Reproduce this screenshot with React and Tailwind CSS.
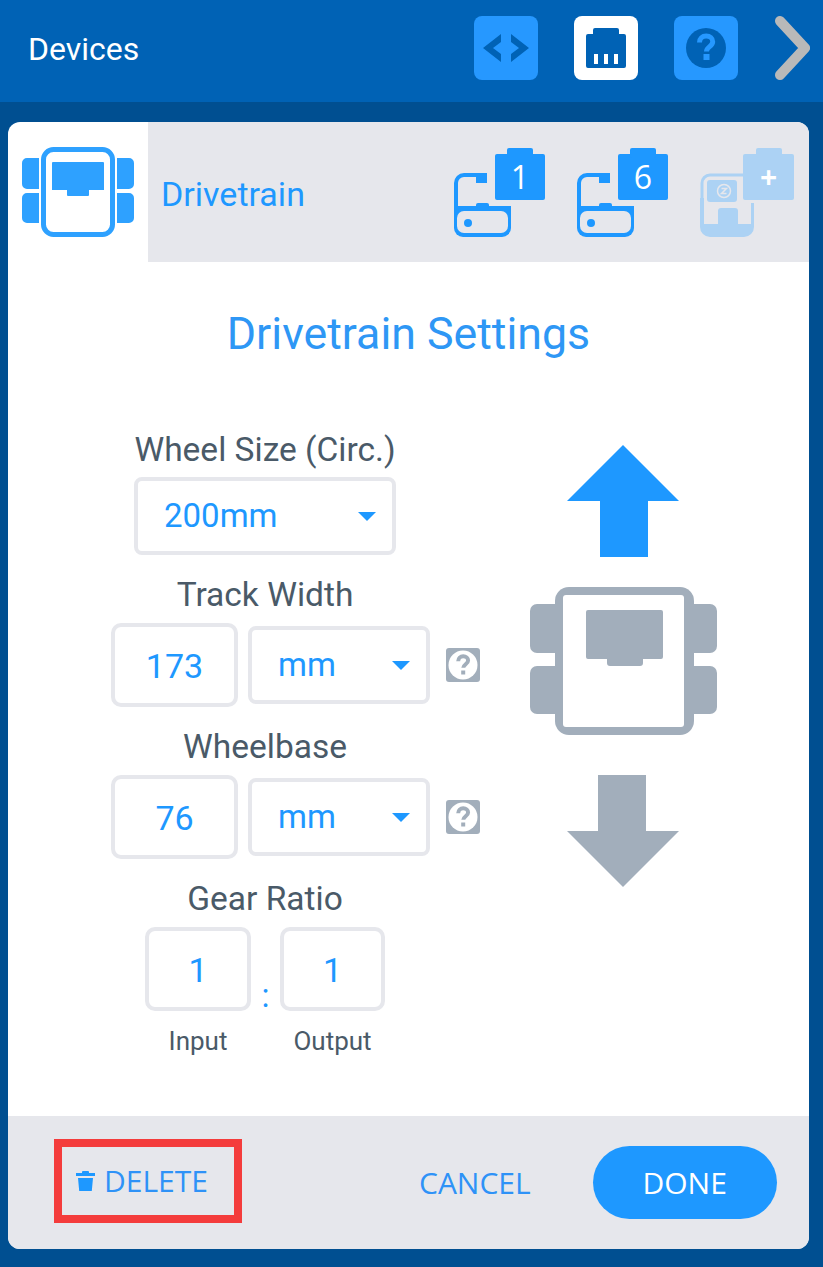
import React from 'react'

const HelpGlyph = ({ color }) => (
  <path d="M25.5 26.5c0-4 2.8-6.5 6.7-6.5 3.8 0 6.5 2.3 6.5 5.7 0 4.8-6.2 5-6.2 9.8" fill="none" stroke={color} strokeWidth="5" />
)

// robot seen from above, used in the card header
const DrivetrainIcon = () => (
  <svg width="112" height="90" viewBox="0 0 112 90" className="shrink-0">
    <g fill="#2ea1ff">
      <path d="M5 11h12v31H5a5 5 0 0 1-5-5V16a5 5 0 0 1 5-5zM5 46h12v30H5a5 5 0 0 1-5-5V51a5 5 0 0 1 5-5z" />
      <path d="M95 11h12a5 5 0 0 1 5 5v21a5 5 0 0 1-5 5H95zM95 46h12a5 5 0 0 1 5 5v20a5 5 0 0 1-5 5H95z" />
    </g>
    <rect x="21.5" y="2.5" width="69" height="85" rx="10" fill="#fff" stroke="#2ea1ff" strokeWidth="5" />
    <path d="M31 15h50a1 1 0 0 1 1 1v27H67v5a1 1 0 0 1-1 1H46a1 1 0 0 1-1-1v-5H30V16a1 1 0 0 1 1-1z" fill="#2ea1ff" />
  </svg>
)

const RobotLarge = () => (
  <svg width="187" height="148" viewBox="0 0 187 148" className="mt-[30px]">
    <g fill="#a2aebb">
      <path d="M7 17h19v49H7a7 7 0 0 1-7-7V24a7 7 0 0 1 7-7zM7 79h19v48H7a7 7 0 0 1-7-7V86a7 7 0 0 1 7-7z" />
      <path d="M162 17h18a7 7 0 0 1 7 7v35a7 7 0 0 1-7 7h-18zM162 79h18a7 7 0 0 1 7 7v34a7 7 0 0 1-7 7h-18z" />
    </g>
    <rect x="25" y="0" width="139" height="148" rx="14" fill="#a2aebb" />
    <rect x="33" y="8" width="121" height="132" rx="3" fill="#fff" />
    <path d="M58 23h73a2 2 0 0 1 2 2v45a2 2 0 0 1-2 2h-18v4a3 3 0 0 1-3 3H80a3 3 0 0 1-3-3v-4H58a2 2 0 0 1-2-2V25a2 2 0 0 1 2-2z" fill="#a2aebb" />
  </svg>
)

// brain with a numbered motor block on its port
const PortIcon = ({ number }) => (
  <div className="relative w-[91px] h-[89px] shrink-0">
    <svg width="91" height="89" viewBox="0 0 91 89" className="block">
      <rect x="41" y="6" width="50" height="46" rx="2" fill="#1e98ff" />
      <rect x="53" y="0" width="26" height="10" rx="2" fill="#1e98ff" />
      <path d="M33 27H10a8 8 0 0 0-8 8v25" fill="none" stroke="#1e98ff" strokeWidth="4" />
      <rect x="22" y="25" width="11" height="10" fill="#1e98ff" />
      <path d="M0 58h57v22a9 9 0 0 1-9 9H9a9 9 0 0 1-9-9z" fill="#1e98ff" />
      <rect x="22" y="55" width="13" height="5" rx="2" fill="#1e98ff" />
      <rect x="3" y="63" width="51" height="22" rx="7" fill="#e6e7ec" />
      <circle cx="14" cy="75" r="4" fill="#1e98ff" />
    </svg>
    <span className="absolute left-[41px] top-[6px] w-[50px] h-[46px] flex items-center justify-center text-white text-[32px] font-['Open_Sans',sans-serif]">
      {number}
    </span>
  </div>
)

const AddDeviceIcon = () => (
  <div className="relative w-[94px] h-[89px] shrink-0">
    <svg width="94" height="89" viewBox="0 0 94 89" className="block">
      <path d="M44 27H10a8 8 0 0 0-8 8v40" fill="none" stroke="#acd2f4" strokeWidth="3" />
      <rect x="7" y="32" width="30" height="22" rx="3" fill="#acd2f4" />
      <circle cx="24" cy="43" r="6.5" fill="none" stroke="#e6e7ec" strokeWidth="1.5" />
      <path d="M21.5 40.5h5l-5 5h5" fill="none" stroke="#e6e7ec" strokeWidth="1.5" />
      <path d="M0 50v29a10 10 0 0 0 10 10h34a10 10 0 0 0 10-10V55h-3v21H38V63a3 3 0 0 0-3-3H21a3 3 0 0 0-3 3v13H4V50z" fill="#acd2f4" />
      <rect x="43" y="6" width="51" height="46" rx="2" fill="#acd2f4" />
      <rect x="56" y="0" width="26" height="10" rx="2" fill="#acd2f4" />
    </svg>
    <span className="absolute left-[43px] top-[6px] w-[51px] h-[46px] flex items-center justify-center text-white text-[30px] font-bold font-['Open_Sans',sans-serif]">
      +
    </span>
  </div>
)

const Caret = () => (
  <svg width="18" height="9" viewBox="0 0 18 9" className="shrink-0">
    <path d="M0 0h18L9 9z" fill="#1e98ff" />
  </svg>
)

const Label = ({ children, className = '' }) => (
  <div className={`h-[38px] pt-px text-center text-[33.5px] leading-[38px] text-[#4a5a68] whitespace-nowrap ${className}`}>{children}</div>
)

const Select = ({ value, className = '' }) => (
  <div className={`h-[78px] border-4 border-[#e6e7ec] rounded-lg flex items-center justify-between pl-[26px] pr-4 text-[33px] text-[#1e98ff] bg-white ${className}`}>
    <span>{value}</span>
    <Caret />
  </div>
)

const NumberBox = ({ value, className = '' }) => (
  <div className={`h-[84px] border-4 border-[#e6e7ec] rounded-[10px] flex items-center justify-center pt-[3px] text-[34px] text-[#1e98ff] bg-white shrink-0 ${className}`}>
    {value}
  </div>
)

const HelpButton = () => (
  <svg width="34" height="34" viewBox="0 0 34 34" className="ml-4 shrink-0">
    <rect width="34" height="34" rx="3" fill="#a2aebb" />
    <circle cx="17" cy="17" r="14.5" fill="#fff" />
    <path d="M12.2 13.2c0-3 2.2-4.9 5-4.9s4.9 1.8 4.9 4.2c0 3.6-4.8 3.8-4.8 7.3" fill="none" stroke="#a2aebb" strokeWidth="4" />
    <rect x="15.2" y="22.5" width="4" height="4" fill="#a2aebb" />
  </svg>
)

const MeasureRow = ({ value }) => (
  <div className="mt-[10px] flex items-center w-[370px] ml-[1px]">
    <NumberBox value={value} className="w-[127px]" />
    <Select value="mm" className="w-[182px] ml-[10px]" />
    <HelpButton />
  </div>
)

const HeaderButton = ({ active, children }) => (
  <div className={`w-16 h-16 rounded-lg ${active ? 'bg-white' : 'bg-[#2698ff]'}`}>
    <svg width="64" height="64" viewBox="0 0 64 64" className="block">{children}</svg>
  </div>
)

const App = () => {
  return (
    <div className="w-[823px] h-[1267px] bg-[#004f91] flex flex-col font-['Roboto',sans-serif] overflow-hidden">
      {/* Top bar */}
      <header className="h-[102px] shrink-0 bg-[#0062b5] flex items-start pl-[29px] pt-4">
        <div className="h-16 -ml-px pt-[2px] flex items-center text-white text-[32px] w-[446px]">Devices</div>
        <div className="flex gap-9">
          <HeaderButton>
            <path d="M27 18v8l-8 6 8 6v8L9 32zM37 18v8l8 6-8 6v8l18-14z" fill="#0062b5" />
          </HeaderButton>
          <HeaderButton active>
            <path d="M21 12h22a2 2 0 0 1 2 2v4h5a2 2 0 0 1 2 2v30a2 2 0 0 1-2 2H14a2 2 0 0 1-2-2V20a2 2 0 0 1 2-2h5v-4a2 2 0 0 1 2-2z" fill="#0062b5" />
            <path d="M20 38h4v10h-4zM30 38h4v10h-4zM40 38h4v10h-4z" fill="#fff" />
          </HeaderButton>
          <HeaderButton>
            <circle cx="32" cy="32" r="20" fill="#0062b5" />
            <HelpGlyph color="#2698ff" />
            <rect x="29.5" y="38" width="6" height="6" fill="#2698ff" />
          </HeaderButton>
        </div>
        <svg width="36" height="64" viewBox="0 0 36 64" className="ml-9 shrink-0">
          <path d="M6 5l25 27L6 59" fill="none" stroke="#b9b9b9" strokeWidth="10" strokeLinecap="round" strokeLinejoin="round" />
        </svg>
      </header>

      {/* Card */}
      <main className="mt-5 ml-2 w-[801px] h-[1127px] shrink-0 bg-white rounded-xl overflow-hidden flex flex-col">
        <div className="h-[140px] shrink-0 flex">
          <div className="w-[140px] shrink-0 flex items-center pl-[14px]">
            <DrivetrainIcon />
          </div>
          <div className="flex-1 bg-[#e6e7ec] flex items-center pl-[13px]">
            <span className="text-[34px] text-[#1e98ff] w-[293px] pt-1">Drivetrain</span>
            <div className="flex gap-8">
              <PortIcon number="1" />
              <PortIcon number="6" />
              <AddDeviceIcon />
            </div>
          </div>
        </div>

        <h1 className="h-[142px] shrink-0 flex items-center justify-center pt-1 text-[44.7px] font-normal text-[#2e97f5]">
          Drivetrain Settings
        </h1>
        <div className="h-[26px] shrink-0" />

        <div className="flex-1 flex">
          {/* Settings form */}
          <div className="w-[310px] ml-[102px] shrink-0">
            <Label>Wheel Size (Circ.)</Label>
            <Select value="200mm" className="w-[262px] mx-auto mt-[9px]" />

            <Label className="mt-5">Track Width</Label>
            <MeasureRow value="173" />

            <Label className="mt-5">Wheelbase</Label>
            <MeasureRow value="76" />

            <Label className="mt-5">Gear Ratio</Label>
            <div className="mt-[10px] flex justify-center">
              <div className="w-[106px]">
                <NumberBox value="1" className="w-[106px]" />
                <div className="mt-[15px] text-center text-[26px] leading-[30px] text-[#4a5a68]">Input</div>
              </div>
              <div className="w-[29px] h-[84px] flex items-end justify-center text-[33px] leading-[30px] text-[#1e98ff]">:</div>
              <div className="w-[105px]">
                <NumberBox value="1" className="w-[105px]" />
                <div className="mt-[15px] text-center text-[26px] leading-[30px] text-[#4a5a68]">Output</div>
              </div>
            </div>
          </div>

          {/* Direction picker */}
          <div className="ml-[110px] w-[187px] shrink-0 pt-[15px] flex flex-col items-center">
            <svg width="112" height="112" viewBox="0 0 112 112" className="block mr-px">
              <path d="M56 0l56 56H81v56H33V56H0z" fill="#1e98ff" />
            </svg>
            <RobotLarge />
            <svg width="112" height="112" viewBox="0 0 112 112" className="block mt-10 mr-px">
              <path d="M31 0h48v56h33l-56 56L0 56h31z" fill="#a2aebb" />
            </svg>
          </div>
        </div>

        {/* Footer */}
        <footer className="h-[133px] shrink-0 bg-[#e6e7ec] flex items-center font-['Open_Sans',sans-serif] text-[30px]">
          <button className="ml-[46px] mt-[-4px] w-[188px] h-[84px] border-8 border-[#f43c3c] flex items-center pl-[14px] text-[#2e92f7] uppercase">
            <svg width="19" height="20" viewBox="0 0 19 20" className="shrink-0 mr-[9px]">
              <path d="M6 2V1a1 1 0 0 1 1-1h5a1 1 0 0 1 1 1v1h6v3H0V2zM2 7h15l-1.2 13H3.2z" fill="#1e98ff" />
            </svg>
            Delete
          </button>
          <button className="ml-[177px] text-[#2e92f7] uppercase">Cancel</button>
          <button className="ml-[62px] w-[184px] h-[73px] rounded-full bg-[#1e98ff] text-white uppercase">Done</button>
        </footer>
      </main>
    </div>
  )
}

export default App
